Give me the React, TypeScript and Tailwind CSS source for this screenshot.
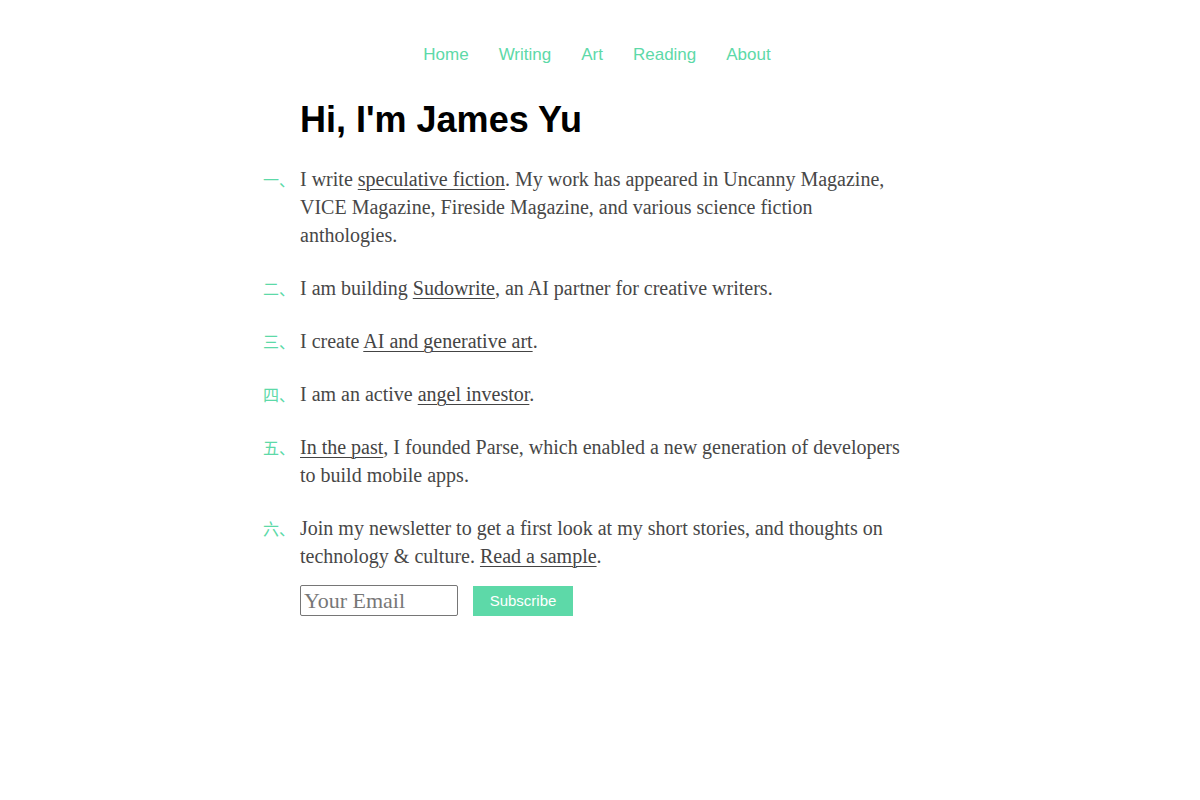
import React from "react";

const serif = { fontFamily: '"Liberation Serif", "Times New Roman", serif' };

function Num({ children }: { children: React.ReactNode }) {
  return (
    <span
      className="absolute left-[-37px] top-[2px] text-[16px] leading-[24px] text-[#5dd9a8]"
      style={{ fontFamily: '"Noto Sans CJK SC", sans-serif' }}
    >
      {children}
    </span>
  );
}

function Item({ num, children }: { num: string; children: React.ReactNode }) {
  return (
    <li className="relative mb-[25px]">
      <Num>{num}</Num>
      {children}
    </li>
  );
}

const A = ({ children }: { children: React.ReactNode }) => (
  <a href="#" className="underline decoration-1 underline-offset-[3px] text-[#444]">
    {children}
  </a>
);

export default function App() {
  return (
    <div className="min-h-[800px] bg-white" style={{ fontFamily: '"Liberation Sans", Arial, sans-serif' }}>
      <nav className="flex justify-center gap-[30px] pt-[44px] pr-[6px] text-[17px] leading-[22px] text-[#5dd9a8]">
        <a href="#">Home</a>
        <a href="#">Writing</a>
        <a href="#">Art</a>
        <a href="#">Reading</a>
        <a href="#">About</a>
      </nav>
      <main className="mx-auto w-[600px] pt-[32px]">
        <h1 className="text-[36px] font-bold leading-[44px] text-black">Hi, I'm James Yu</h1>
        <ul className="mt-[23px] text-[20px] leading-[28px] text-[#474747]" style={serif}>
          <Item num="一、">
            I write <A>speculative fiction</A>. My work has appeared in Uncanny Magazine, VICE Magazine, Fireside
            Magazine, and various science fiction anthologies.
          </Item>
          <Item num="二、">
            I am building <A>Sudowrite</A>, an AI partner for creative writers.
          </Item>
          <Item num="三、">
            I create <A>AI and generative art</A>.
          </Item>
          <Item num="四、">
            I am an active <A>angel investor</A>.
          </Item>
          <Item num="五、">
            <A>In the past</A>, I founded Parse, which enabled a new generation of developers to build mobile apps.
          </Item>
          <li className="relative">
            <Num>六、</Num>
            Join my newsletter to get a first look at my short stories, and thoughts on technology &amp; culture.{" "}
            <A>Read a sample</A>.
            <form className="mt-[15px] flex items-center gap-[15px]" onSubmit={(e) => e.preventDefault()}>
              <input
                type="email"
                placeholder="Your Email"
                className="h-[31px] w-[158px] rounded-[2px] border border-[#767676] px-[3px] text-[22px] text-[#444] placeholder:text-[#777] outline-none"
                style={serif}
              />
              <button
                type="submit"
                className="h-[30px] w-[100px] bg-[#5dd9a8] text-[15px] text-white"
                style={{ fontFamily: '"Liberation Sans", Arial, sans-serif' }}
              >
                Subscribe
              </button>
            </form>
          </li>
        </ul>
      </main>
    </div>
  );
}
